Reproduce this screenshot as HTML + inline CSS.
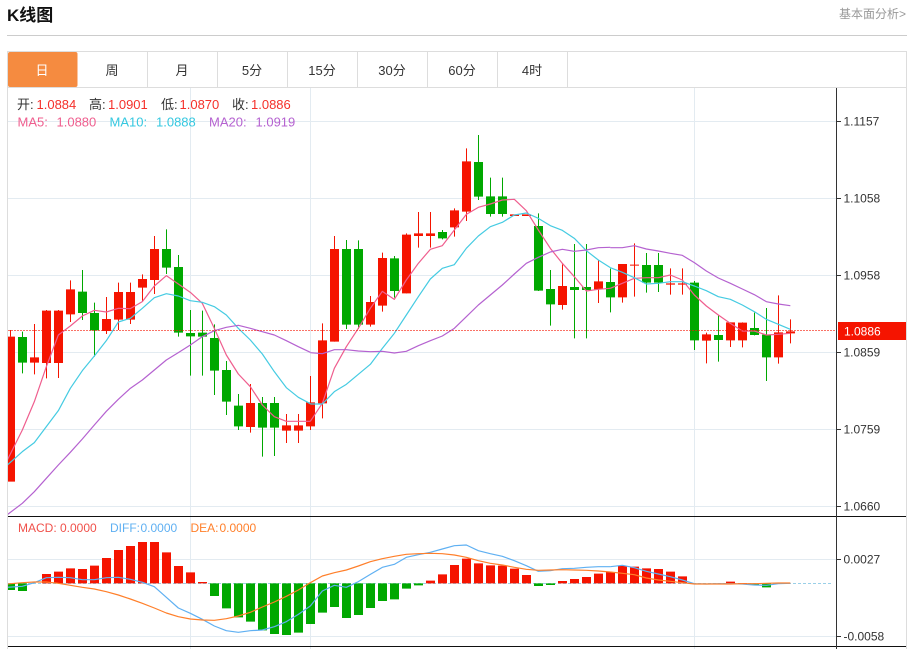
<!DOCTYPE html>
<html lang="zh"><head><meta charset="utf-8"><title>K线图</title>
<style>
html,body{margin:0;padding:0;background:#fff;width:914px;height:649px;overflow:hidden}
svg{display:block}
text{font-family:"Liberation Sans","Noto Sans CJK SC",sans-serif}
.w{fill:none;stroke-width:3}
.b{fill:none;stroke-width:27}
.r{stroke:#f51400}.g{stroke:#00a800}
.l{fill:none;stroke-width:3.6;stroke-linejoin:round}
.m5{stroke:#ef5e8e}.m10{stroke:#45cbe2}.m20{stroke:#b562d0}
.dif{stroke:#5fb0f2}.dea{stroke:#ff7f2a}
.ax{font-size:12px;fill:#333}
.lg{font-size:13px}
.mc{font-size:12px}
.tab{font-size:13px;fill:#333;text-anchor:middle}
</style></head><body>
<svg width="914" height="649" viewBox="0 0 914 649" xmlns="http://www.w3.org/2000/svg">
<defs><clipPath id="c"><rect x="8" y="88" width="828" height="561"/></clipPath></defs>
<text x="7" y="21" font-size="17" font-weight="700" fill="#111">K线图</text>
<text x="839" y="18" font-size="12" fill="#999">基本面分析&gt;</text>
<path d="M7 35.5H907" stroke="#ccc" fill="none"/>
<!-- frame -->
<path d="M7.5 649V51.5H906.5V649M8 87.5H906M147.5 52V87M217.5 52V87M287.5 52V87M357.5 52V87M427.5 52V87M497.5 52V87M567.5 52V87" stroke="#ddd" fill="none"/>
<rect x="8" y="52" width="69.5" height="35" rx="2" fill="#f58b40"/>
<text class="tab" x="42" y="75" style="fill:#fff">日</text>
<text class="tab" x="112" y="75">周</text>
<text class="tab" x="182" y="75">月</text>
<text class="tab" x="252" y="75">5分</text>
<text class="tab" x="322" y="75">15分</text>
<text class="tab" x="392" y="75">30分</text>
<text class="tab" x="462" y="75">60分</text>
<text class="tab" x="532" y="75">4时</text>
<!-- grid -->
<path d="M8 121.5H836M8 198.5H836M8 275.5H836M8 352.5H836M8 429.5H836M8 506.5H836M8 559.5H836M8 636.5H836M190.5 88V649M310.5 88V649M694.5 88V649" stroke="#e3ebf1" fill="none"/>
<path d="M8 583.5H833" stroke="#9ad0e8" stroke-dasharray="3 2" fill="none"/>
<g clip-path="url(#c)">
<!-- candles left -->
<g transform="translate(0,220) scale(.33333)">
<path class="w r" d="M31.5 330V350M103.5 312V463M139.5 270V475M175.5 270V474M211.5 181V306M319.5 231V342M355.5 188V330M391.5 188V312M427.5 163V245M463.5 48V222M751.5 492V638M859.5 582V669M895.5 582V669M931.5 468V630"/>
<path class="b r" d="M31.5 350V785M103.5 412V428M139.5 272V429M175.5 272V429M211.5 208V283M319.5 297V333M355.5 216V299M391.5 216V299M427.5 177V203M463.5 87V180M751.5 549V621M859.5 616V632M895.5 616V632M931.5 547V619"/>
<path class="w g" d="M67.5 335V460M247.5 150V300M283.5 248V410M499.5 28V162M535.5 105V350M571.5 270V467M607.5 272V467M643.5 313V525M679.5 423V585M715.5 522V630M787.5 531V710M823.5 531V708"/>
<path class="b g" d="M67.5 351V428M247.5 215V279M283.5 279V331M499.5 87V143M535.5 141V338M571.5 339V349M607.5 338V350M643.5 354V452M679.5 450V545M715.5 557V619M787.5 549V623M823.5 549V623"/>
</g>
<!-- candles middle -->
<g transform="translate(300,120) scale(.33333)">
<path class="w r" d="M67.5 610V895M103.5 348V665M211.5 528V620M247.5 398V575M319.5 340V520M355.5 276V383M391.5 276V383M463.5 265V350M499.5 85V303M787.5 433V569M895.5 420V549"/>
<path class="b r" d="M67.5 661V850M103.5 387V665M211.5 546V614M247.5 414V557M319.5 344V520M355.5 340V348M391.5 340V348M463.5 271V322M499.5 124V275M643.5 283V288M679.5 283V288M787.5 498V555M895.5 484V508"/>
<path class="w g" d="M139.5 360V627M175.5 361V627M283.5 408V533M427.5 330V358M535.5 45V240M571.5 173V290M607.5 173V290M715.5 280V513M751.5 450V617M823.5 372V655M859.5 372V655M931.5 446V577"/>
<path class="b g" d="M139.5 387V614M175.5 387V614M283.5 415V513M427.5 336V355M535.5 126V230M571.5 229V282M607.5 229V282M715.5 318V512M751.5 507V553M823.5 501V510M859.5 501V510M931.5 486V532"/>
</g>
<!-- candles right -->
<g transform="translate(600,220) scale(.33333)">
<path class="w r" d="M67.5 132V248M103.5 70V230M211.5 145V224M247.5 145V224M319.5 338V430M391.5 307V381M427.5 307V382M535.5 226V431M571.5 298V370"/>
<path class="b r" d="M67.5 132V232M103.5 134V137M211.5 190V194M247.5 190V194M319.5 343V362M391.5 307V361M427.5 308V361M535.5 337V412M571.5 334V340"/>
<path class="w g" d="M139.5 99V218M175.5 99V216M283.5 183V390M355.5 285V425M463.5 278V346M499.5 264V483"/>
<path class="b g" d="M139.5 135V188M175.5 135V188M283.5 188V361M355.5 345V360M463.5 324V345M499.5 344V412"/>
</g>
<!-- MA lines -->
<g transform="translate(0,220) scale(.33333)">
<polyline class="l m5" points="22,720 67,630 103,545 139,440 175,345 211,318 247,288 283,271 319,276 355,265 391,266 427,245 463,198 499,167 535,192 571,217 607,250 643,325 679,405 715,462 751,500 787,555 823,590 859,604 895,604 931,604"/>
<polyline class="l m10" points="22,735 67,695 103,668 139,620 175,572 211,505 247,452 283,408 319,362 355,306 391,295 427,265 463,233 499,221 535,228 571,242 607,247 643,260 679,285 715,325 751,360 787,402 823,455 859,503 895,532 931,551"/>
<polyline class="l m20" points="22,884 67,850 103,815 139,775 175,735 211,697 247,657 283,615 319,574 355,538 391,505 427,480 463,450 499,420 535,398 571,375 607,350 643,332 679,322 715,316 751,325 787,335 823,345 859,362 895,380 931,397"/>
</g>
<g transform="translate(300,120) scale(.33333)">
<polyline class="l m5" points="31,904 67,850 103,745 139,680 175,625 211,565 247,514 283,538 319,480 355,430 391,388 427,377 463,330 499,283 535,262 571,252 607,240 643,238 679,272 715,330 751,385 787,430 823,470 859,513 895,508 931,505"/>
<polyline class="l m10" points="31,852 67,852 103,815 139,793 175,763 211,733 247,685 283,640 319,585 355,530 391,477 427,445 463,434 499,385 535,348 571,320 607,307 643,285 679,279 715,295 751,317 787,331 823,355 859,392 895,420 931,443"/>
<polyline class="l m20" points="31,698 67,701 103,689 139,689 175,693 211,695 247,694 283,699 319,694 355,677 391,662 427,648 463,625 499,590 535,555 571,525 607,495 643,462 679,430 715,412 751,396 787,388 823,394 859,390 895,383 931,382"/>
</g>
<g transform="translate(600,220) scale(.33333)">
<polyline class="l m5" points="31,205 67,190 103,175 139,173 175,173 211,165 247,180 283,225 319,258 355,285 391,310 427,333 463,333 499,345 535,343 571,340"/>
<polyline class="l m10" points="31,143 67,157 103,173 139,192 175,190 211,185 247,185 283,198 319,212 355,230 391,238 427,255 463,275 499,298 535,313 571,328"/>
<polyline class="l m20" points="31,83 67,83 103,77 139,87 175,93 211,100 247,106 283,128 319,153 355,174 391,190 427,207 463,224 499,245 535,252 571,257"/>
</g>
<!-- MACD bars -->
<g transform="translate(0,510) scale(.33333)">
<path class="b r" d="M139.5 220V192M175.5 220V185M211.5 220V175M247.5 220V177M283.5 220V167M319.5 220V144M355.5 220V120M391.5 220V108M427.5 220V96M463.5 220V96M499.5 220V127M535.5 220V168M571.5 220V187M607.5 220V216"/>
<path class="b g" d="M31.5 220V240M67.5 220V243M643.5 220V258M679.5 220V295M715.5 220V322M751.5 220V335M787.5 220V361M823.5 220V372M859.5 220V375M895.5 220V368M931.5 220V342"/>
</g>
<g transform="translate(300,510) scale(.33333)">
<path class="b g" d="M67.5 220V308M103.5 220V291M139.5 220V324M175.5 220V315M211.5 220V294M247.5 220V273M283.5 220V268M319.5 220V236M355.5 220V226M715.5 220V228M751.5 220V225"/>
<path class="b r" d="M391.5 220V212M427.5 220V193M463.5 220V165M499.5 220V146M535.5 220V160M571.5 220V166M607.5 220V167M643.5 220V176M679.5 220V195M787.5 220V213M823.5 220V207M859.5 220V201M895.5 220V191M931.5 220V186"/>
</g>
<g transform="translate(600,510) scale(.33333)">
<path class="b r" d="M67.5 220V168M103.5 220V170M139.5 220V175M175.5 220V177M211.5 220V185M247.5 220V199M391.5 220V215M427.5 220V219"/>
<path class="b g" d="M463.5 220V225M499.5 220V232"/>
</g>
<!-- MACD lines -->
<g transform="translate(0,510) scale(.33333)">
<polyline class="l dif" points="22,232 67,229 103,218 139,203 175,202 211,203 247,209 283,209 319,203 355,202 391,208 427,217 463,230 499,262 535,294 571,310 607,328 643,348 679,362 715,367 751,362 787,360 823,350 859,335 895,313 931,288"/>
<polyline class="l dea" points="22,222 67,218 103,216 139,216 175,220 211,226 247,232 283,237 319,245 355,255 391,267 427,280 463,294 499,309 535,320 571,327 607,330 643,331 679,326 715,318 751,307 787,291 823,276 859,259 895,240 931,218"/>
</g>
<g transform="translate(300,510) scale(.33333)">
<polyline class="l dif" points="31,288 67,243 103,226 139,232 175,215 211,193 247,172 283,163 319,142 355,134 391,127 427,117 463,107 499,105 535,122 571,131 607,139 643,152 679,167 715,184 751,182 787,176 823,175 859,172 895,170 931,170"/>
<polyline class="l dea" points="31,218 67,198 103,188 139,180 175,168 211,155 247,146 283,139 319,133 355,131 391,130 427,131 463,135 499,142 535,152 571,160 607,165 643,172 679,178 715,181 751,180 787,179 823,180 859,181 895,183 931,186"/>
</g>
<g transform="translate(600,510) scale(.33333)">
<polyline class="l dif" points="31,170 67,166 103,173 139,184 175,192 211,200 247,210 283,221 319,222 355,221 391,221 427,222 463,225 499,226 535,221 571,220"/>
<polyline class="l dea" points="31,186 67,190 103,194 139,204 175,210 211,214 247,218 283,222 319,222 355,222 391,222 427,221 463,221 499,220 535,219 571,219"/>
</g>
</g>
<!-- current price line -->
<path d="M8 330.5H836" stroke="#f51400" stroke-opacity=".6" stroke-dasharray="2 1" fill="none"/>
<!-- separators & axis -->
<path d="M8 516.5H906M8 646.5H906" stroke="#111" fill="none"/>
<path d="M836.5 88V649" stroke="#333" fill="none"/>
<path d="M836 121.5H841M836 198.5H841M836 275.5H841M836 352.5H841M836 429.5H841M836 506.5H841M836 559.5H841M836 636.5H841" stroke="#333" fill="none"/>
<text class="ax" x="843.5" y="125.5">1.1157</text>
<text class="ax" x="843.5" y="202.5">1.1058</text>
<text class="ax" x="843.5" y="279.5">1.0958</text>
<text class="ax" x="843.5" y="356.5">1.0859</text>
<text class="ax" x="843.5" y="433.5">1.0759</text>
<text class="ax" x="843.5" y="510.5">1.0660</text>
<text class="ax" x="843.5" y="563.5">0.0027</text>
<text class="ax" x="843.5" y="640.5">-0.0058</text>
<rect x="838" y="322" width="68" height="18" fill="#f51400"/>
<text class="ax" x="844" y="335.5" style="fill:#fff">1.0886</text>
<!-- legends -->
<g class="lg" fill="#333">
<text x="17" y="109">开:</text><text x="89" y="109">高:</text><text x="161" y="109">低:</text><text x="232" y="109">收:</text>
</g>
<g class="lg" fill="#f5302a">
<text x="36.5" y="109">1.0884</text><text x="108" y="109">1.0901</text><text x="179.5" y="109">1.0870</text><text x="251" y="109">1.0886</text>
</g>
<g class="lg">
<text x="17.5" y="126.5" fill="#ef5e8e">MA5:</text><text x="56.5" y="126.5" fill="#ef5e8e">1.0880</text>
<text x="109.5" y="126.5" fill="#35c8e0">MA10:</text><text x="156" y="126.5" fill="#35c8e0">1.0888</text>
<text x="209" y="126.5" fill="#b562d0">MA20:</text><text x="255.5" y="126.5" fill="#b562d0">1.0919</text>
</g>
<g class="mc">
<text x="18" y="532" fill="#f0504a">MACD:</text><text x="60" y="532" fill="#f0504a">0.0000</text>
<text x="110" y="532" fill="#5fb0f2">DIFF:</text><text x="140.5" y="532" fill="#5fb0f2">0.0000</text>
<text x="190.5" y="532" fill="#ff7f2a">DEA:</text><text x="219.5" y="532" fill="#ff7f2a">0.0000</text>
</g>
</svg>
</body></html>
